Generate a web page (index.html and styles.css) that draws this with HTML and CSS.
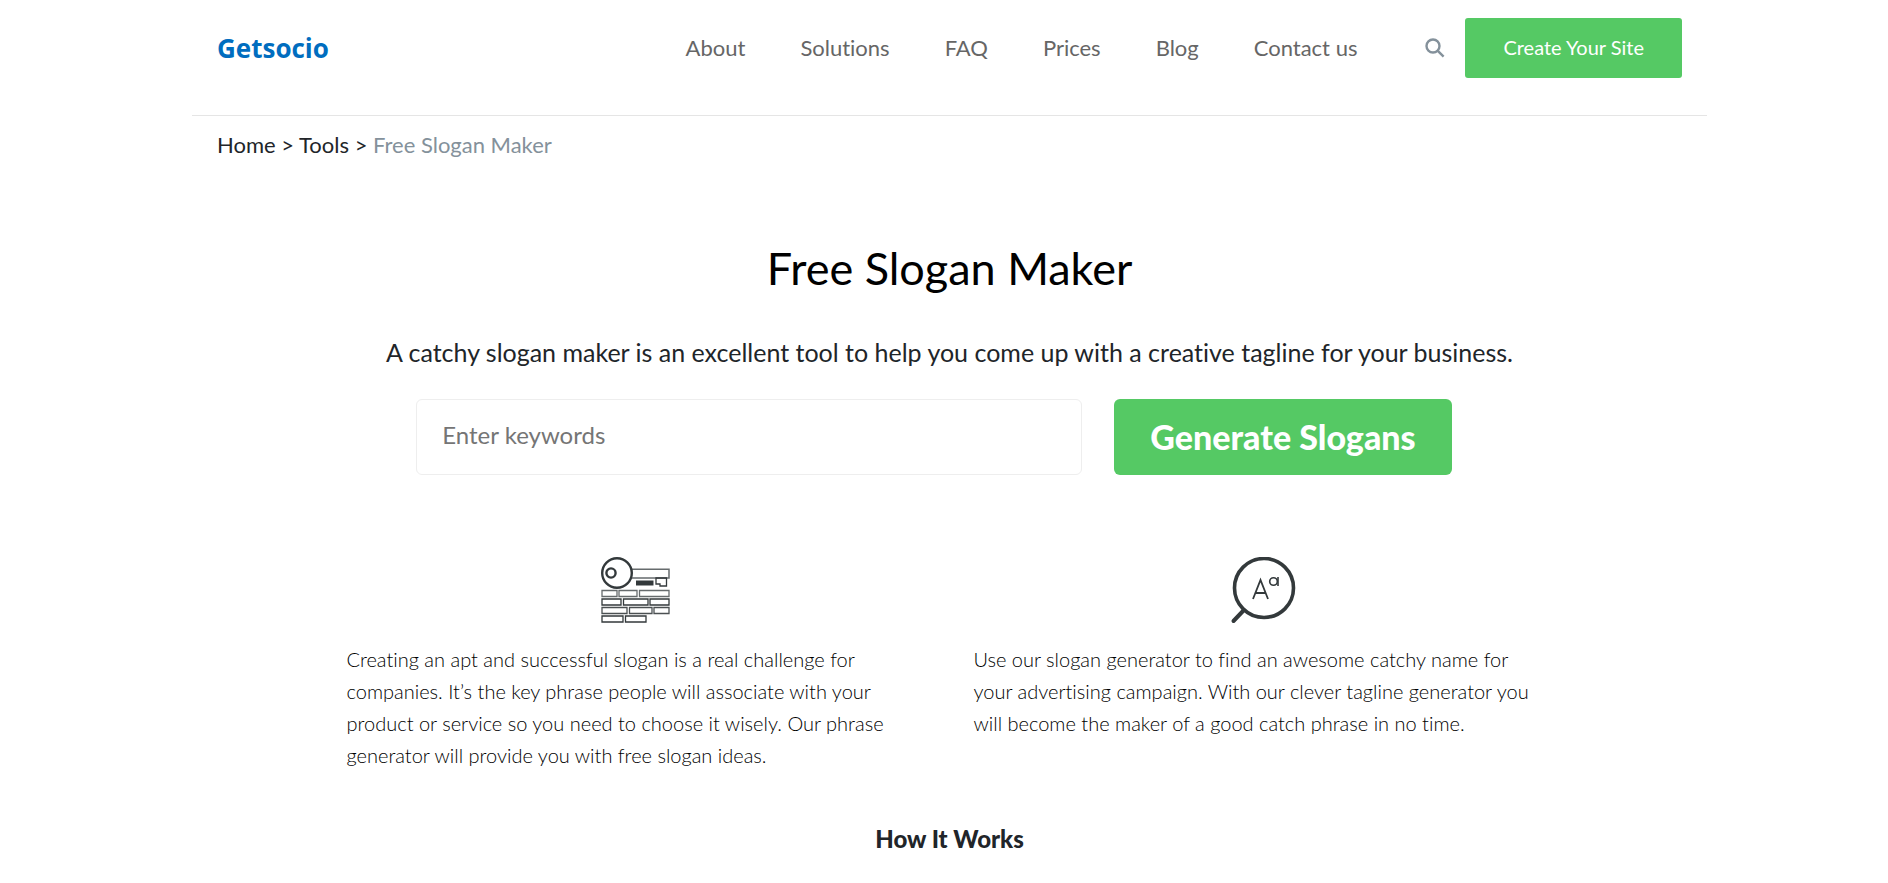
FILE: index.html
```html
<!DOCTYPE html>
<html lang="en">
    <head>
        <meta charset="utf-8">
        <meta name="viewport" content="width=device-width, initial-scale=1">
        <title>Free Slogan Maker</title>
        <link rel="stylesheet" href="styles.css">
    </head>
    <body>
        <div class="container">
            <header class="header">
                <a href="#" class="logo">Getsocio</a>
                <nav class="menu">
                    <a href="#">About</a>
                    <a href="#">Solutions</a>
                    <a href="#">FAQ</a>
                    <a href="#">Prices</a>
                    <a href="#">Blog</a>
                    <a href="#">Contact us</a>
                </nav>
                <button type="button" class="search" aria-label="Search">
                    <svg width="20" height="20" viewBox="0 0 20 20" fill="none" stroke="#84919b" stroke-width="2.4">
                        <circle cx="8" cy="8" r="6.5"/>
                        <path d="M12.8 12.8L18.6 18.6"/>
                    </svg>
                </button>
                <button type="button" class="create-button">Create Your Site</button>
            </header>
            <div class="breadcrumbs">
                <a href="#">Home</a> &gt; <a href="#">Tools</a> &gt; <span class="current">Free Slogan Maker</span>
            </div>
            <main>
                <h1>Free Slogan Maker</h1>
                <p class="intro">A catchy slogan maker is an excellent tool to help you come up with a creative tagline for your business.</p>
                <form class="slogan-form">
                    <input type="text" name="keywords" class="keywords" placeholder="Enter keywords" aria-label="Enter keywords">
                    <button type="button" class="generate-button">Generate Slogans</button>
                </form>
                <div class="features">
                    <div class="feature">
                        <svg class="feature-icon" width="70" height="68" viewBox="0 0 70 68" fill="none" stroke="#33393b" stroke-width="1.3">
                            <path d="M31 12.3H68V21H31" stroke="#666b6d" stroke-width="1.5"/>
                            <circle cx="16" cy="16" r="14.8" fill="#fff" stroke-width="2.4"/>
                            <circle cx="10" cy="16" r="4.6" stroke-width="2.4"/>
                            <path d="M35 23.500H52.500V28.500H35Z" fill="#33393b" stroke="none"/>
                            <path d="M55 21V27H59V29H65.500V21Z"/>
                            <path d="M1 33.500H16V39.500H1ZM18 33.500H36V39.500H18ZM38.500 33.500H68V39.500H38.500Z" stroke="#666b6d"/>
                            <path d="M1 42H20V48H1ZM22.500 42H47V48H22.500ZM49 42H68V48H49Z"/>
                            <path d="M1 50.500H26V56.500H1ZM28.500 50.500H51V56.500H28.500ZM53 50.500H68V56.500H53Z" stroke="#4b5052"/>
                            <path d="M1 59H22V65H1ZM24.500 59H45V65H24.500Z"/>
                        </svg>
                        <p>Creating an apt and successful slogan is a real challenge for companies. It’s the key phrase people will associate with your product or service so you need to choose it wisely. Our phrase generator will provide you with free slogan ideas.</p>
                    </div>
                    <div class="feature">
                        <svg class="feature-icon" width="66" height="68" viewBox="0 0 66 68" fill="none" stroke="#33393b" stroke-width="3.6">
                            <circle cx="34" cy="31" r="29.5"/>
                            <path d="M13.500 53.500L3.500 64" stroke-width="4" stroke-linecap="round"/>
                            <path d="M23 42L30.500 23L38 42M25.500 36H35.500" stroke-width="1.8"/>
                            <circle cx="43.500" cy="24.500" r="3.800" stroke-width="1.6"/>
                            <path d="M48 20V29" stroke-width="1.6"/>
                        </svg>
                        <p>Use our slogan generator to find an awesome catchy name for your advertising campaign. With our clever tagline generator you will become the maker of a good catch phrase in no time.</p>
                    </div>
                </div>
                <h2>How It Works</h2>
            </main>
        </div>
    </body>
</html>
```
FILE: styles.css
```css
* {
    box-sizing: border-box;
}
body {
    margin: 0;
    padding-left: 11px;
    background-color: #fff;
    color: #212529;
    font-family: Lato, sans-serif;
    font-size: 22px;
    font-variant-ligatures: none;
}
a {
    color: inherit;
    text-decoration: none;
}
button, input {
    font-family: inherit;
}
button {
    border: none;
    cursor: pointer;
}
.container {
    max-width: 1515px;
    margin: 0 auto;
}
.header {
    display: flex;
    align-items: center;
    height: 116px;
    padding: 0 25px 20px;
    border-bottom: 1px solid #e5e5e5;
}
.logo {
    color: #006dbf;
    font-family: "Open Sans", sans-serif;
    font-size: 26px;
    font-weight: 700;
}
.menu {
    display: flex;
    gap: 55px;
    margin-left: auto;
    color: #666;
}
.search {
    display: flex;
    margin-left: 68px;
    padding: 0;
    background: none;
}
.create-button {
    height: 60px;
    margin-left: 20px;
    padding: 0 38px 2px;
    border-radius: 3px;
    background-color: #55c964;
    color: #fff;
    font-size: 20px;
}
.breadcrumbs {
    padding: 15px 25px;
    line-height: 28px;
}
.current {
    color: #84919b;
}
h1 {
    margin: 62px 0 0;
    font-size: 45px;
    font-weight: 400;
    line-height: 64px;
    text-align: center;
    color: #000;
}
.intro {
    margin: 34px 0 0;
    font-size: 25px;
    line-height: 36px;
    text-align: center;
}
.slogan-form {
    display: flex;
    justify-content: center;
    gap: 32px;
    margin: 29px 31px 0 0;
}
.keywords {
    width: 666px;
    height: 76px;
    padding: 0 25px 6px;
    border: 1px solid #eee;
    border-radius: 6px;
    font-size: 24px;
}
.keywords::placeholder {
    color: #757575;
}
.generate-button {
    height: 76px;
    padding: 0 36px 2px;
    border-radius: 6px;
    background-color: #55c964;
    color: #fff;
    font-size: 34px;
    font-weight: 900;
}
.features {
    display: grid;
    grid-template-columns: 1fr 1fr;
    gap: 48px;
    max-width: 1206px;
    margin: 82px auto 0;
}
.feature-icon {
    display: block;
    margin: 0 auto;
}
.feature p {
    max-width: 568px;
    margin: 18px 0 0;
    color: #000;
    font-size: 20px;
    font-weight: 300;
    line-height: 32px;
}
h2 {
    margin: 52px 0 0;
    font-size: 24px;
    font-weight: 900;
    line-height: 32px;
    text-align: center;
}
```
